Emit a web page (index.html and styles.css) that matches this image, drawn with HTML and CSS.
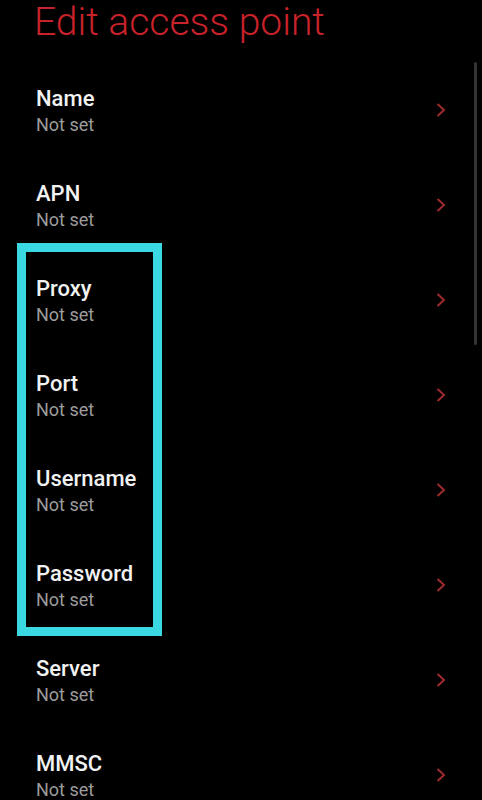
FILE: index.html
```html
<!doctype html>
<html lang="en">
  <head>
    <meta charset="UTF-8" />
    <meta name="viewport" content="width=device-width, initial-scale=1.0" />
    <title>Edit access point</title>
    <link rel="stylesheet" href="styles.css">
  </head>
  <body>
    <div class="screen">
      <h1 class="page-title">Edit access point</h1>

      <div class="pref-list">
        <div class="pref-row">
          <div class="pref-text">
            <div class="pref-label">Name</div>
            <div class="pref-value">Not set</div>
          </div>
          <svg class="chevron" viewBox="0 0 10 14"><polyline points="1.5,1 8,7 1.5,13" /></svg>
        </div>
        <div class="pref-row">
          <div class="pref-text">
            <div class="pref-label">APN</div>
            <div class="pref-value">Not set</div>
          </div>
          <svg class="chevron" viewBox="0 0 10 14"><polyline points="1.5,1 8,7 1.5,13" /></svg>
        </div>

        <!-- highlighted group -->
        <div class="pref-group highlight">
          <div class="pref-row">
            <div class="pref-text">
              <div class="pref-label">Proxy</div>
              <div class="pref-value">Not set</div>
            </div>
            <svg class="chevron" viewBox="0 0 10 14"><polyline points="1.5,1 8,7 1.5,13" /></svg>
          </div>
          <div class="pref-row">
            <div class="pref-text">
              <div class="pref-label">Port</div>
              <div class="pref-value">Not set</div>
            </div>
            <svg class="chevron" viewBox="0 0 10 14"><polyline points="1.5,1 8,7 1.5,13" /></svg>
          </div>
          <div class="pref-row">
            <div class="pref-text">
              <div class="pref-label">Username</div>
              <div class="pref-value">Not set</div>
            </div>
            <svg class="chevron" viewBox="0 0 10 14"><polyline points="1.5,1 8,7 1.5,13" /></svg>
          </div>
          <div class="pref-row">
            <div class="pref-text">
              <div class="pref-label">Password</div>
              <div class="pref-value">Not set</div>
            </div>
            <svg class="chevron" viewBox="0 0 10 14"><polyline points="1.5,1 8,7 1.5,13" /></svg>
          </div>
        </div>

        <div class="pref-row">
          <div class="pref-text">
            <div class="pref-label">Server</div>
            <div class="pref-value">Not set</div>
          </div>
          <svg class="chevron" viewBox="0 0 10 14"><polyline points="1.5,1 8,7 1.5,13" /></svg>
        </div>
        <div class="pref-row">
          <div class="pref-text">
            <div class="pref-label">MMSC</div>
            <div class="pref-value">Not set</div>
          </div>
          <svg class="chevron" viewBox="0 0 10 14"><polyline points="1.5,1 8,7 1.5,13" /></svg>
        </div>
      </div>

      <div class="scrollbar"></div>
    </div>
  </body>
</html>
```

FILE: styles.css
```css
:root {
  --color-background: #000;
  --color-title: #c8222b;
  --color-label: #f2f2f2;
  --color-value: #9c9c9c;
  --color-chevron: #9e2a2e;
  --color-highlight: #3ad8e2;
  --font-sans: Roboto, "Noto Sans", "Liberation Sans", sans-serif;
}

html,
body {
  margin: 0;
  padding: 0;
  background: var(--color-background);
}

body {
  font-family: var(--font-sans);
  height: 800px;
  overflow: hidden;
}

.screen {
  position: relative;
  height: 800px;
}

.page-title {
  margin: 0;
  padding: 0 0 17px 34px;
  font-size: 39px;
  font-weight: 300;
  line-height: 44px;
  color: var(--color-title);
}

.pref-list {
  display: flex;
  flex-direction: column;
}

.pref-group {
  display: flex;
  flex-direction: column;
}

.pref-row {
  height: 95px;
  box-sizing: border-box;
  padding: 24px 36px 0 36px;
  display: flex;
  align-items: flex-start;
  justify-content: space-between;
}

.pref-label {
  font-size: 22px;
  font-weight: 500;
  line-height: 28px;
  color: var(--color-label);
}

.pref-value {
  font-size: 18px;
  line-height: 24px;
  color: var(--color-value);
}

.chevron {
  width: 10px;
  height: 14px;
  margin-top: 18px;
  fill: none;
  stroke: var(--color-chevron);
  stroke-width: 2;
}

/* annotation frame drawn over the proxy rows */
.highlight {
  position: relative;
}

.highlight::after {
  content: "";
  position: absolute;
  top: -8px;
  bottom: -5px;
  left: 17px;
  width: 145px;
  box-sizing: border-box;
  border: 9px solid var(--color-highlight);
  pointer-events: none;
}

.scrollbar {
  position: absolute;
  top: 62px;
  left: 474px;
  width: 3px;
  height: 283px;
  border-radius: 2px;
  background: #333;
}
```
